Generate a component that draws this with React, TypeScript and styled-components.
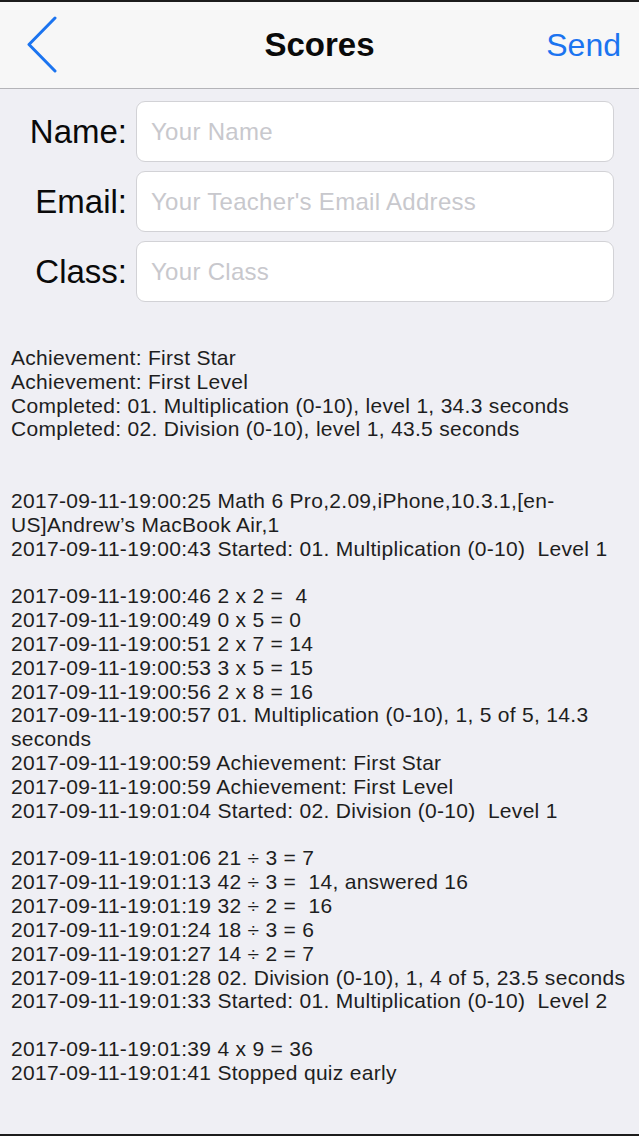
import styled, { createGlobalStyle } from "styled-components";

const GlobalStyle = createGlobalStyle`
  html, body {
    margin: 0;
    padding: 0;
    background: #efeff4;
  }
  * {
    box-sizing: border-box;
  }
`;

const font = `"Liberation Sans", Arial, sans-serif`;
const blue = "#1b74f0";

const Screen = styled.div`
  width: 639px;
  height: 1136px;
  border-top: 2px solid #1c1c1c;
  border-bottom: 2px solid #1c1c1c;
  background: #efeff4;
  overflow: hidden;
  font-family: ${font};
`;

const NavBar = styled.header`
  height: 87px;
  background: #f7f7f7;
  border-bottom: 1px solid #b4b4b8;
  display: grid;
  grid-template-columns: 120px 1fr 120px;
  align-items: center;
`;

const BackButton = styled.button`
  border: 0;
  background: none;
  padding: 0 0 0 26px;
  height: 100%;
  display: flex;
  align-items: center;
  justify-content: flex-start;
`;

const Title = styled.h1`
  margin: 0;
  text-align: center;
  font-size: 33px;
  font-weight: 700;
  color: #0a0a0a;
`;

const SendButton = styled.button`
  border: 0;
  background: none;
  padding: 0 18px 0 0;
  text-align: right;
  font-family: ${font};
  font-size: 32px;
  color: ${blue};
`;

const Form = styled.form`
  display: flex;
  flex-direction: column;
  gap: 9px;
  padding: 12px 25px 0 0;
`;

const Row = styled.label`
  display: grid;
  grid-template-columns: 127px 1fr;
  column-gap: 9px;
  align-items: center;
`;

const FieldLabel = styled.span`
  text-align: right;
  font-size: 33px;
  color: #0a0a0a;
`;

const Field = styled.input`
  height: 61px;
  border: 1px solid #d2d2d6;
  border-radius: 9px;
  background: #fff;
  padding: 0 14px;
  font-family: ${font};
  font-size: 24px;
  letter-spacing: 0.3px;
  color: #222;
  outline: none;

  &::placeholder {
    color: #c8c8cd;
  }
`;

const Log = styled.div`
  margin-top: 44px;
  padding: 0 11px;
  font-size: 21px;
  letter-spacing: 0.3px;
  color: #1e1e1e;
`;

const LogLine = styled.div`
  height: 23.83px;
  line-height: 23.83px;
  white-space: pre;
`;

const summary = [
  "Achievement: First Star",
  "Achievement: First Level",
  "Completed: 01. Multiplication (0-10), level 1, 34.3 seconds",
  "Completed: 02. Division (0-10), level 1, 43.5 seconds",
  "",
  "",
  "2017-09-11-19:00:25 Math 6 Pro,2.09,iPhone,10.3.1,[en-",
  "US]Andrew\u2019s MacBook Air,1",
  "2017-09-11-19:00:43 Started: 01. Multiplication (0-10)  Level 1",
  "",
  "2017-09-11-19:00:46 2 x 2 =  4",
  "2017-09-11-19:00:49 0 x 5 = 0",
  "2017-09-11-19:00:51 2 x 7 = 14",
  "2017-09-11-19:00:53 3 x 5 = 15",
  "2017-09-11-19:00:56 2 x 8 = 16",
  "2017-09-11-19:00:57 01. Multiplication (0-10), 1, 5 of 5, 14.3",
  "seconds",
  "2017-09-11-19:00:59 Achievement: First Star",
  "2017-09-11-19:00:59 Achievement: First Level",
  "2017-09-11-19:01:04 Started: 02. Division (0-10)  Level 1",
  "",
  "2017-09-11-19:01:06 21 \u00f7 3 = 7",
  "2017-09-11-19:01:13 42 \u00f7 3 =  14, answered 16",
  "2017-09-11-19:01:19 32 \u00f7 2 =  16",
  "2017-09-11-19:01:24 18 \u00f7 3 = 6",
  "2017-09-11-19:01:27 14 \u00f7 2 = 7",
  "2017-09-11-19:01:28 02. Division (0-10), 1, 4 of 5, 23.5 seconds",
  "2017-09-11-19:01:33 Started: 01. Multiplication (0-10)  Level 2",
  "",
  "2017-09-11-19:01:39 4 x 9 = 36",
  "2017-09-11-19:01:41 Stopped quiz early",
];

const fields = [
  { label: "Name:", placeholder: "Your Name", type: "text" },
  { label: "Email:", placeholder: "Your Teacher's Email Address", type: "email" },
  { label: "Class:", placeholder: "Your Class", type: "text" },
];

const BackChevron = () => (
  <svg width="32" height="58" viewBox="0 0 32 58" fill="none">
    <path
      d="M29 2 L3 28.5 L29 55"
      stroke={blue}
      strokeWidth="3"
      strokeLinecap="round"
      strokeLinejoin="round"
    />
  </svg>
);

export default function App() {
  return (
    <>
      <GlobalStyle />
      <Screen>
        <NavBar>
          <BackButton aria-label="Back">
            <BackChevron />
          </BackButton>
          <Title>Scores</Title>
          <SendButton>Send</SendButton>
        </NavBar>
        <Form onSubmit={(e) => e.preventDefault()}>
          {fields.map((f) => (
            <Row key={f.label}>
              <FieldLabel>{f.label}</FieldLabel>
              <Field type={f.type} placeholder={f.placeholder} />
            </Row>
          ))}
        </Form>
        <Log>
          {summary.map((line, i) => (
            <LogLine key={i}>{line}</LogLine>
          ))}
        </Log>
      </Screen>
    </>
  );
}
